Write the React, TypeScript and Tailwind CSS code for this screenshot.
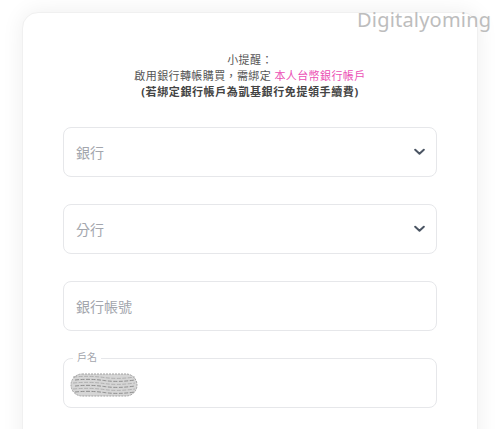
import React from "react";

function Chevron() {
  return (
    <svg width="11" height="8" viewBox="0 0 11 8" fill="none" className="shrink-0">
      <path d="M1.2 1.8 L5.5 5.8 L9.8 1.8" stroke="#4b5563" strokeWidth="2" strokeLinecap="round" strokeLinejoin="round" />
    </svg>
  );
}

function SelectField({ label }: { label: string }) {
  return (
    <div className="h-[50px] rounded-[8px] border border-[#e6e7ea] bg-white flex items-center justify-between pl-[12px] pr-[11px]">
      <span className="text-[14px] text-[#a3a6ad]">{label}</span>
      <Chevron />
    </div>
  );
}

function Redaction() {
  const lines = [4, 7, 10, 13, 16, 19];
  return (
    <svg width="68" height="24" viewBox="0 0 68 24">
      <rect x="1" y="1" width="66" height="22" rx="11" fill="#d6d6d6" />
      {lines.map((y, i) => (
        <path
          key={i}
          d={`M${i % 2 ? 5 : 3} ${y} Q 20 ${y - 1.5} 34 ${y + 0.5} T 65 ${y}`}
          stroke={i % 2 ? "#8f8f8f" : "#b0b0b0"}
          strokeWidth="1"
          fill="none"
          strokeDasharray="4 1.5"
        />
      ))}
      <rect x="1" y="1" width="66" height="22" rx="11" fill="none" stroke="#a0a0a0" strokeWidth="1" strokeDasharray="2 1" />
    </svg>
  );
}

export default function App() {
  return (
    <div className="w-[500px] h-[429px] bg-white overflow-hidden relative" style={{ fontFamily: '"Noto Sans", "Noto Sans CJK TC", sans-serif' }}>
      <div className="ml-[22px] mt-[12px] w-[456px] h-[460px] bg-white rounded-[16px] border border-[#f0f0f0] shadow-[0_0_22px_rgba(0,0,0,0.07)] pt-[39px] px-[40px]">
        <div className="text-center text-[11px] leading-[16px] text-[#555] tracking-[0.4px]">
          <div>小提醒：</div>
          <div>
            啟用銀行轉帳購買，需綁定 <span className="text-[#ec4fb5]">本人台幣銀行帳戶</span>
          </div>
          <div className="font-bold text-[#444] tracking-[0.6px]">(若綁定銀行帳戶為凱基銀行免提領手續費)</div>
        </div>
        <div className="mt-[27px] flex flex-col gap-[27px]">
          <SelectField label="銀行" />
          <SelectField label="分行" />
          <div className="h-[50px] rounded-[8px] border border-[#e6e7ea] bg-white flex items-center pl-[12px]">
            <span className="text-[14px] text-[#a3a6ad]">銀行帳號</span>
          </div>
          <div className="relative h-[50px] rounded-[8px] border border-[#e6e7ea] bg-white flex items-center pl-[6px]">
            <span className="absolute left-[9px] -top-[8px] px-[4px] bg-white text-[10px] leading-[12px] text-[#a3a6ad]">戶名</span>
            <div className="mt-[3px]">
              <Redaction />
            </div>
          </div>
        </div>
      </div>
      <div className="absolute left-[357px] top-[6px] text-[20px] leading-[28px] text-[#bdbdbd] tracking-[0.2px]" style={{ fontFamily: '"Noto Sans", sans-serif' }}>
        Digitalyoming
      </div>
    </div>
  );
}
